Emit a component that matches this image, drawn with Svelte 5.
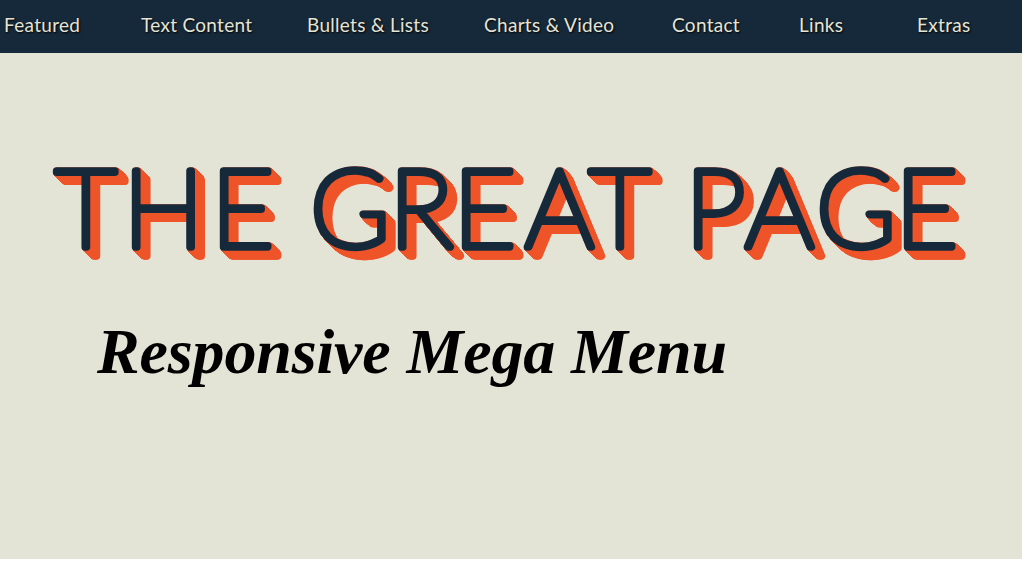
<script>
    const links = ['Featured', 'Text Content', 'Bullets & Lists', 'Charts & Video', 'Contact', 'Links', 'Extras']

    // glyph start positions read off the reference, spaces keep a slot too
    const xs = '55 123 211 290 310 389 453 525 589 670 685 745 816 895'
</script>

<div class="page">
    <nav>
        {#each links as link}
        <a href="#top">{link}</a>
        {/each}
    </nav>

    <main>
        <svg class="logo" width="1022" height="120" viewBox="0 0 1022 120">
            <text x={xs} y="91" xml:space="preserve">THE GREAT PAGE</text>
        </svg>

        <h2>Responsive Mega Menu</h2>
    </main>
</div>

<style>
    :global(body) {
        background: #fff;
    }
    .page {
        width: 1022px;
        height: 559px;
        overflow: hidden;
        background: #e4e4d6;
    }
    nav {
        display: grid;
        grid-template-columns: 137px 166px 177px 188px 127px 118px auto;
        height: 53px;
        box-sizing: border-box;
        align-items: center;
        padding: 0 0 5px 4px;
        background: #16293a;
    }
    a {
        color: #e4e4d6;
        font-family: "Lato", sans-serif;
        font-size: 19px;
        letter-spacing: 0.3px;
        text-decoration: none;
        white-space: nowrap;
        text-shadow: 1px 1px 2px #000;
    }
    main {
        padding-top: 103px;
    }
    /* each drop-shadow stacks on the last one, which gives the solid 3d edge */
    .logo {
        display: block;
        filter:
            drop-shadow(1px 1px 0 #ef5429) drop-shadow(1px 1px 0 #ef5429) drop-shadow(1px 1px 0 #ef5429)
            drop-shadow(1px 1px 0 #ef5429) drop-shadow(1px 1px 0 #ef5429) drop-shadow(1px 1px 0 #ef5429)
            drop-shadow(1px 1px 0 #ef5429) drop-shadow(1px 1px 0 #ef5429) drop-shadow(1px 1px 0 #ef5429)
            drop-shadow(1px 0 0 #ef5429);
    }
    text {
        font-family: "Lato", sans-serif;
        font-weight: 100;
        font-size: 108px;
        fill: #16293a;
        stroke: #16293a;
        stroke-width: 7.5px;
        stroke-linejoin: round;
        stroke-linecap: round;
    }
    h2 {
        margin: 39px 0 0 97px;
        font-family: "Liberation Serif", serif;
        font-size: 64px;
        font-style: italic;
        font-weight: bold;
        letter-spacing: -0.15px;
        line-height: 74px;
        color: #000;
    }
</style>
